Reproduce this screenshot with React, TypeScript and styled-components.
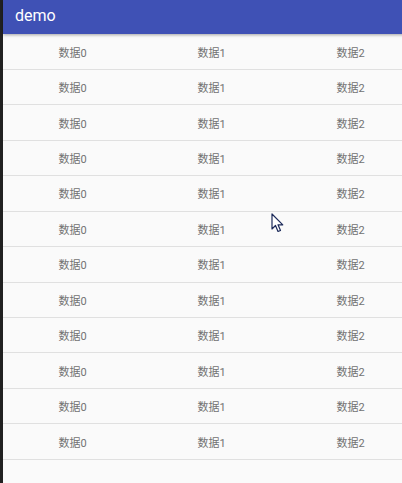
import React from "react"
import styled, { createGlobalStyle } from "styled-components"

const GlobalStyle = createGlobalStyle`
  html, body {
    margin: 0;
    padding: 0;
    background: #fafafa;
    font-family: Roboto, "Noto Sans CJK SC", sans-serif;
  }
`

const rows = Array.from({ length: 12 }, (_, i) => i)
const cols = ["数据0", "数据1", "数据2"]

const Pointer = () => (
  <svg width="13" height="20" viewBox="0 0 13 20">
    <path
      d="M1 1 L1 16 L4.5 12.5 L7 18.5 L9.5 17.5 L7 11.8 L11.8 11.8 Z"
      fill="#fff"
      stroke="#1c2a5a"
      strokeWidth="1.2"
      strokeLinejoin="round"
    />
  </svg>
)

const App: React.FC = () => {
  return (
    <Screen>
      <GlobalStyle />
      <Edge />
      <Main>
        <AppBar>
          <Title>demo</Title>
        </AppBar>
        <List>
          {rows.map((r) => (
            <Row key={r}>
              {cols.map((c) => (
                <Cell key={c}>{c}</Cell>
              ))}
            </Row>
          ))}
        </List>
      </Main>
      <Cursor>
        <Pointer />
      </Cursor>
    </Screen>
  )
}

export default App

const Screen = styled.div`
  position: relative;
  width: 402px;
  height: 483px;
  overflow: hidden;
  display: flex;
  background: #fafafa;
`

const Edge = styled.div`
  width: 3px;
  flex-shrink: 0;
  background: #212121;
`

const Main = styled.div`
  flex: 1;
  display: flex;
  flex-direction: column;
`

const AppBar = styled.header`
  height: 34px;
  flex-shrink: 0;
  background: #3f51b5;
  display: flex;
  align-items: center;
  padding-left: 12px;
  box-shadow: 0 1px 3px rgba(0, 0, 0, 0.35);
  position: relative;
  z-index: 1;
`

const Title = styled.span`
  color: #fff;
  font-size: 16px;
  margin-top: -3px;
`

const List = styled.div`
  flex: 1;
  padding-top: 0.5px;
`

const Row = styled.div`
  height: 35.45px;
  box-sizing: border-box;
  border-bottom: 1px solid #e0e0e0;
  display: grid;
  grid-template-columns: repeat(3, 139px);
  align-items: center;
`

const Cell = styled.div`
  text-align: center;
  font-size: 11px;
  color: #727272;
`

const Cursor = styled.div`
  position: absolute;
  left: 271px;
  top: 213px;
  z-index: 2;
  line-height: 0;
`
